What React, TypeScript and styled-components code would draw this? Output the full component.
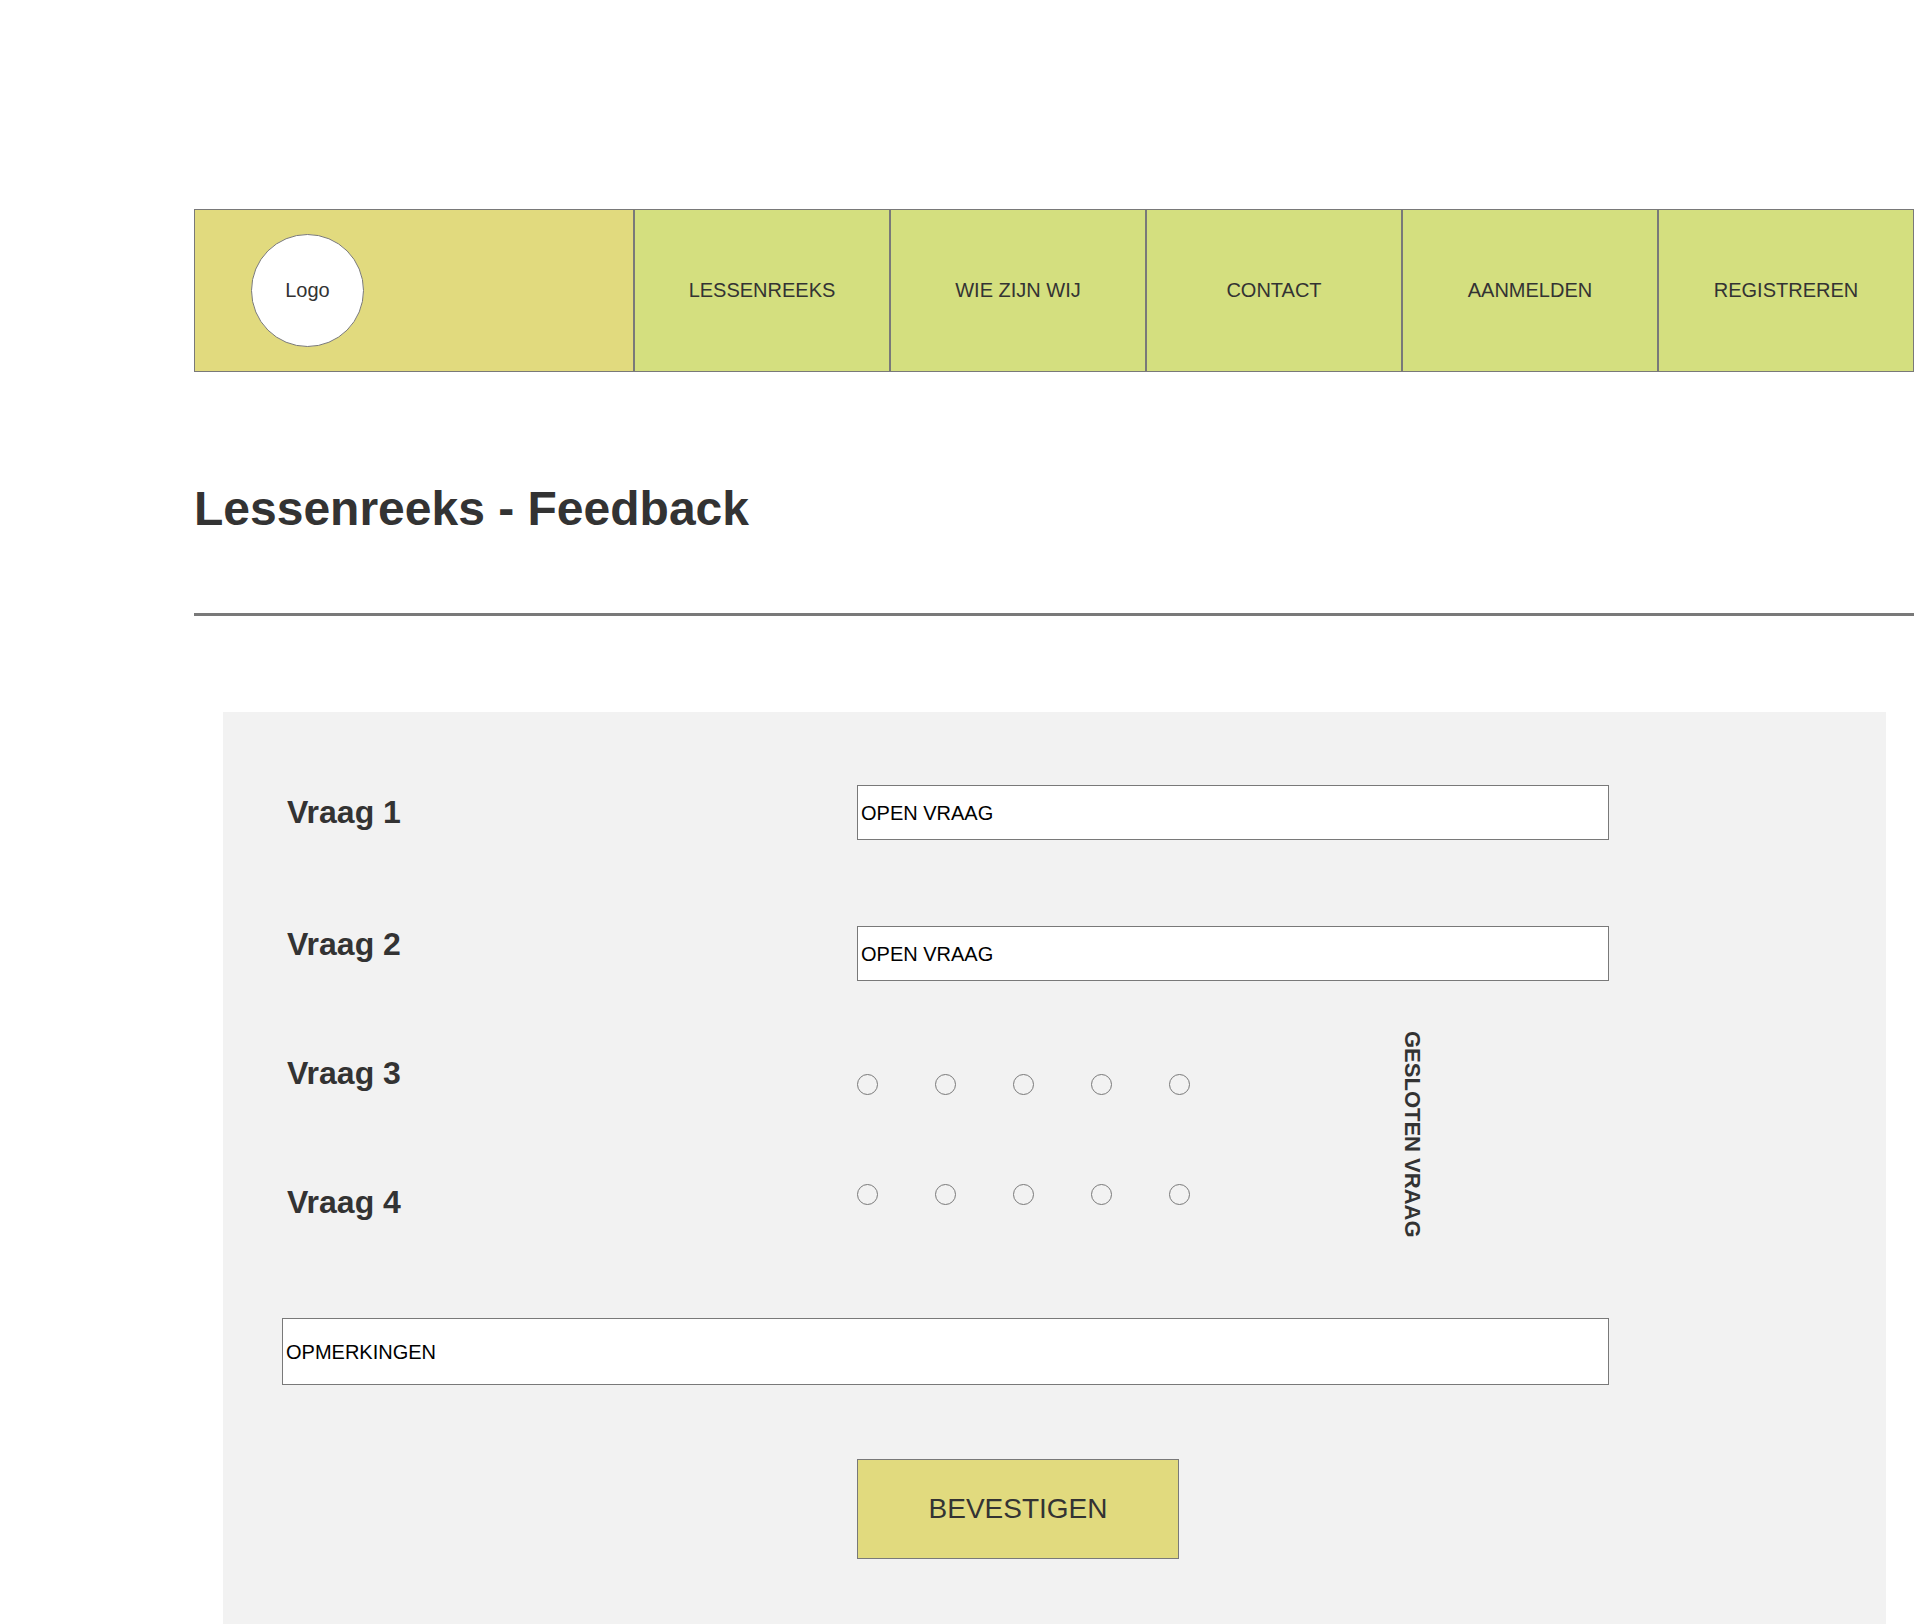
import React from "react";
import styled, { createGlobalStyle } from "styled-components";

const color = {
  text: "#333333",
  line: "#797979",
  yellow: "#e1da7e",
  green: "#d4df7f",
  panel: "#f2f2f2",
  white: "#ffffff",
};

const GlobalStyle = createGlobalStyle`
  *, *::before, *::after {
    box-sizing: border-box;
  }

  body {
    margin: 0;
    background: ${color.white};
    color: ${color.text};
    font-family: "Liberation Sans", Arial, Helvetica, sans-serif;
    font-size: 20px;
    line-height: 23px;
  }
`;

const Page = styled.div`
  padding: 209px 0 0 194px;
`;

const Header = styled.header`
  display: flex;
  height: 163px;
`;

const Brand = styled.div`
  display: flex;
  align-items: center;
  flex: 0 0 440px;
  padding-left: 56px;
  border: 1px solid ${color.line};
  background: ${color.yellow};
`;

const Logo = styled.div`
  display: flex;
  align-items: center;
  justify-content: center;
  width: 113px;
  height: 113px;
  border: 1px solid ${color.line};
  border-radius: 50%;
  background: ${color.white};
`;

const Nav = styled.nav`
  display: flex;
  flex: 1;
`;

const NavLink = styled.a`
  display: flex;
  flex: 1 1 0;
  align-items: center;
  justify-content: center;
  border: 1px solid ${color.line};
  background: ${color.green};
  color: inherit;
  text-decoration: none;
`;

const Title = styled.h1`
  margin: 108px 0 75px;
  font-size: 48px;
  line-height: 58px;
`;

const Rule = styled.hr`
  height: 3px;
  margin: 0 0 96px;
  border: 0;
  background: ${color.line};
`;

const Panel = styled.form`
  display: grid;
  grid-template-columns: 575fr 752fr 277fr;
  margin: 0 28px 0 29px;
  padding: 73px 0 65px 59px;
  background: ${color.panel};
`;

const Labels = styled.div`
  display: flex;
  flex-direction: column;
  gap: 93px;
  padding: 9px 0 0 5px;
`;

const OpenLabels = styled.div`
  display: flex;
  flex-direction: column;
  gap: 96px;
`;

const Question = styled.label`
  font-size: 32px;
  font-weight: bold;
  line-height: 36px;
`;

const Answers = styled.div`
  display: flex;
  flex-direction: column;
`;

const OpenAnswers = styled.div`
  display: flex;
  flex-direction: column;
  gap: 86px;
`;

const TextField = styled.input<{ $tall?: boolean }>`
  display: block;
  width: 100%;
  height: ${(p) => (p.$tall ? 67 : 55)}px;
  padding: 2px 3px 0;
  border: 1px solid ${color.line};
  border-radius: 0;
  background: ${color.white};
  color: #000000;
  font: inherit;
`;

const ClosedAnswers = styled.div`
  display: flex;
  gap: 209px;
  height: 207px;
  margin-top: 50px;
`;

const Scales = styled.div`
  display: flex;
  flex-direction: column;
  gap: 89px;
  padding-top: 43px;
`;

const Scale = styled.div`
  display: flex;
  gap: 57px;
`;

const Radio = styled.input`
  appearance: none;
  width: 21px;
  height: 21px;
  margin: 0;
  border: 1px solid ${color.line};
  border-radius: 50%;

  &:checked {
    background: radial-gradient(circle, ${color.text} 40%, transparent 45%);
  }
`;

const SideNote = styled.p`
  margin: 0;
  font-size: 22px;
  font-weight: bold;
  line-height: 26px;
  white-space: nowrap;
  writing-mode: vertical-rl;
`;

const Remarks = styled.div`
  grid-column: 1 / 3;
  margin-top: 80px;
`;

const Submit = styled.button`
  grid-column: 2;
  width: 322px;
  height: 100px;
  margin-top: 74px;
  padding: 0;
  border: 1px solid ${color.line};
  border-radius: 0;
  background: ${color.yellow};
  color: inherit;
  font-family: inherit;
  font-size: 28px;
  cursor: pointer;
`;

const links = ["LESSENREEKS", "WIE ZIJN WIJ", "CONTACT", "AANMELDEN", "REGISTREREN"];
const openQuestions = [1, 2];
const closedQuestions = [3, 4];
const scores = [1, 2, 3, 4, 5];

export default function App() {
  return (
    <>
      <GlobalStyle />
      <Page>
        <Header>
          <Brand>
            <Logo>Logo</Logo>
          </Brand>
          <Nav>
            {links.map((link) => (
              <NavLink key={link} href="#">
                {link}
              </NavLink>
            ))}
          </Nav>
        </Header>

        <main>
          <Title>Lessenreeks - Feedback</Title>
          <Rule />

          <Panel onSubmit={(e: React.FormEvent) => e.preventDefault()}>
            <Labels>
              <OpenLabels>
                {openQuestions.map((n) => (
                  <Question key={n} htmlFor={`vraag-${n}`}>
                    Vraag {n}
                  </Question>
                ))}
              </OpenLabels>
              {closedQuestions.map((n) => (
                <Question key={n} as="span" id={`vraag-${n}`}>
                  Vraag {n}
                </Question>
              ))}
            </Labels>

            <Answers>
              <OpenAnswers>
                {openQuestions.map((n) => (
                  <TextField key={n} id={`vraag-${n}`} type="text" defaultValue="OPEN VRAAG" />
                ))}
              </OpenAnswers>
              <ClosedAnswers>
                <Scales>
                  {closedQuestions.map((n) => (
                    <Scale key={n} role="radiogroup" aria-labelledby={`vraag-${n}`}>
                      {scores.map((score) => (
                        <Radio
                          key={score}
                          type="radio"
                          name={`vraag-${n}`}
                          value={score}
                          aria-label={`${score}`}
                        />
                      ))}
                    </Scale>
                  ))}
                </Scales>
                <SideNote>GESLOTEN VRAAG</SideNote>
              </ClosedAnswers>
            </Answers>

            <Remarks>
              <TextField $tall type="text" aria-label="Opmerkingen" defaultValue="OPMERKINGEN" />
            </Remarks>

            <Submit type="submit">BEVESTIGEN</Submit>
          </Panel>
        </main>
      </Page>
    </>
  );
}
